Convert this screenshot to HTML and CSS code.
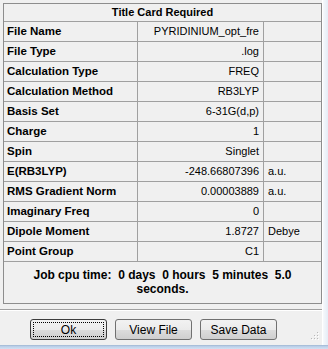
FILE: index.html
```html
<!DOCTYPE html>
<html>
<head>
<meta charset="utf-8">
<link rel="stylesheet" href="styles.css">
</head>
<body>
<div class="app">
  <div class="top">
    <div class="main">
      <div class="panel">
        <div class="title">Title Card Required</div>
        <div class="grid">
          <div class="lbl">File Name</div><div class="val">PYRIDINIUM_opt_fre</div><div class="unit"></div>
          <div class="lbl">File Type</div><div class="val">.log</div><div class="unit"></div>
          <div class="lbl">Calculation Type</div><div class="val">FREQ</div><div class="unit"></div>
          <div class="lbl">Calculation Method</div><div class="val">RB3LYP</div><div class="unit"></div>
          <div class="lbl">Basis Set</div><div class="val">6-31G(d,p)</div><div class="unit"></div>
          <div class="lbl">Charge</div><div class="val">1</div><div class="unit"></div>
          <div class="lbl">Spin</div><div class="val">Singlet</div><div class="unit"></div>
          <div class="lbl">E(RB3LYP)</div><div class="val">-248.66807396</div><div class="unit">a.u.</div>
          <div class="lbl">RMS Gradient Norm</div><div class="val">0.00003889</div><div class="unit">a.u.</div>
          <div class="lbl">Imaginary Freq</div><div class="val">0</div><div class="unit"></div>
          <div class="lbl">Dipole Moment</div><div class="val">1.8727</div><div class="unit">Debye</div>
          <div class="lbl">Point Group</div><div class="val">C1</div><div class="unit"></div>
        </div>
        <div class="job"><span class="line">Job cpu time:  0 days  0 hours  5 minutes  5.0</span><span class="line">seconds.</span></div>
      </div>
      <div class="sep"></div>
      <div class="buttons">
        <button class="btn default"><span class="focus">Ok</span></button>
        <button class="btn">View File</button>
        <button class="btn">Save Data</button>
        <svg class="grip" width="8" height="8" viewBox="0 0 8 8">
          <rect x="6" y="0" width="1" height="1" fill="#b8b8b8"/>
          <rect x="3" y="3" width="1" height="1" fill="#b8b8b8"/>
          <rect x="6" y="3" width="1" height="1" fill="#b8b8b8"/>
          <rect x="0" y="6" width="1" height="1" fill="#b8b8b8"/>
          <rect x="3" y="6" width="1" height="1" fill="#b8b8b8"/>
          <rect x="6" y="6" width="1" height="1" fill="#b8b8b8"/>
          <rect x="7" y="1" width="1" height="1" fill="#ffffff"/>
          <rect x="4" y="4" width="1" height="1" fill="#ffffff"/>
          <rect x="7" y="4" width="1" height="1" fill="#ffffff"/>
          <rect x="1" y="7" width="1" height="1" fill="#ffffff"/>
          <rect x="4" y="7" width="1" height="1" fill="#ffffff"/>
          <rect x="7" y="7" width="1" height="1" fill="#ffffff"/>
        </svg>
      </div>
    </div>
    <div class="chrome"></div>
  </div>
  <div class="bottom"></div>
</div>
</body>
</html>
```
FILE: styles.css
```css
* { box-sizing: border-box; }
html, body { margin: 0; padding: 0; }
body {
  background: #f0f0f0;
  font-family: "Liberation Sans", Arial, sans-serif;
  font-size: 11px;
  color: #000;
}
.app {
  width: 328px;
  height: 349px;
  display: flex;
  flex-direction: column;
  overflow: hidden;
}
.top {
  display: flex;
  height: 345px;
}
.main {
  width: 322px;
  padding: 3px 0 0 3px;
  display: flex;
  flex-direction: column;
}
.chrome {
  width: 6px;
  background: linear-gradient(to right, #f7f9fc, #e4ecf6);
  border-left: 1px solid #ffffff;
}
.bottom {
  height: 4px;
  background: linear-gradient(to bottom, #9fb6d2, #bdd1ea 40%, #d3e1f2);
}
.panel {
  width: 319px;
  height: 301px;
  border: 1px solid #8d8d8d;
  display: flex;
  flex-direction: column;
}
.title {
  height: 18px;
  border-bottom: 1px solid #a0a0a0;
  font-weight: bold;
  text-align: center;
  line-height: 17px;
}
.grid {
  display: grid;
  grid-template-columns: 134px 126px 1fr;
  grid-auto-rows: 20px;
}
.grid > div {
  border-bottom: 1px solid #a0a0a0;
  line-height: 19px;
  white-space: nowrap;
  overflow: hidden;
}
.lbl {
  font-weight: bold;
  font-size: 11.5px;
  padding-left: 3px;
  border-right: 1px solid #a0a0a0;
}
.val {
  text-align: right;
  padding-right: 4px;
  border-right: 1px solid #a0a0a0;
}
.unit {
  padding-left: 4px;
}
.job {
  display: flex;
  flex-direction: column;
  align-items: center;
  padding-top: 6px;
  font-weight: bold;
  font-size: 12px;
  line-height: 14px;
}
.job .line { white-space: pre; }
.sep {
  margin-top: 5px;
  margin-left: -3px;
  width: 322px;
  height: 2px;
  border-top: 1px solid #a0a0a0;
  border-bottom: 1px solid #ffffff;
}
.buttons {
  display: flex;
  gap: 8px;
  margin-top: 8px;
  padding-left: 27px;
  align-items: flex-end;
}
.btn {
  width: 77px;
  height: 21px;
  padding: 0;
  border: 1px solid #707070;
  border-radius: 3px;
  background: linear-gradient(to bottom, #f2f2f2 0%, #ebebeb 50%, #dddddd 51%, #cfcfcf 100%);
  font-family: "Liberation Sans", Arial, sans-serif;
  font-size: 12px;
  color: #000;
  display: flex;
  align-items: center;
  justify-content: center;
}
.btn.default {
  border-color: #3c3c3c;
  padding: 2px;
}
.focus {
  flex: 1;
  align-self: stretch;
  display: flex;
  align-items: center;
  justify-content: center;
  border: 1px dotted #000;
}
.grip {
  margin-left: auto;
  margin-right: 3px;
}
```
